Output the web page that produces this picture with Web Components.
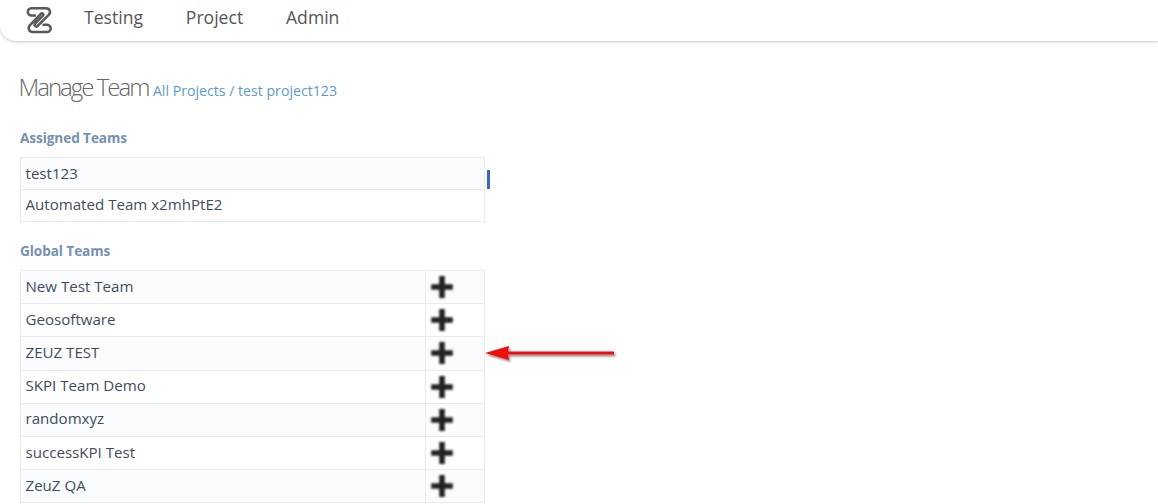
<!DOCTYPE html>
<html><head><meta charset="utf-8">
<style>
html,body{margin:0;padding:0;background:#fff;overflow:hidden;height:504px}
body{font-family:"Open Sans",sans-serif;color:#3d4a5c}
</style></head>
<body>
<template id="t-nav"><style>
:host{display:flex;align-items:center;height:41px;box-sizing:border-box;background:#fff;border-bottom-left-radius:16px;box-shadow:0 1px 3px rgba(0,0,0,.22);padding-left:25px;position:relative}
svg{width:28px;height:28px;display:block;margin-right:31px;margin-top:-1px}
.items{display:flex;gap:42.800px;font-size:17.6px;color:#555;margin-top:-8px}
</style>
<svg viewBox="0 0 28 28" fill="none" stroke="#5a5a5a" stroke-width="2.500" stroke-linejoin="round" stroke-linecap="round">
<path d="M10 9.500 H6.500 a3.600 3.600 0 0 1 -.2 -7.200 H21 c4 0 5.200 4 2.700 6.600 L12.500 20 c-1.500 1.500 -4 -.8 -2.400 -2.500 L18 9.600 c1.200 -1.200 -.6 -3.200 -2.200 -1.700 L5.200 18.800 C2.500 21.600 3.600 26 7.500 26 H22 a3.600 3.600 0 0 0 .2 -7.200 H18.500"/>
</svg>
<div class="items"><slot></slot></div></template>

<template id="t-heading"><style>
:host{display:flex;align-items:baseline;margin:29px 0 0 18.500px;height:32px;white-space:nowrap}
h1{margin:0;font-size:24px;font-weight:300;letter-spacing:-2px;color:#666}
.crumb{margin-left:4.500px;font-size:14.15px;font-weight:400;color:#6199c9}
</style><h1><slot name="title"></slot></h1><span class="crumb"><slot></slot></span></template>

<template id="t-section"><style>
:host{display:block;margin-left:20px;width:465px}
h2{margin:0;font-size:13.6px;line-height:19px;font-weight:700;color:#7690b0;letter-spacing:-.08px}
.box{margin-top:10px}
</style><h2><slot name="title"></slot></h2><div class="box"><slot></slot></div></template>

<template id="t-row"><style>
:host{--top:-1.200px;display:grid;grid-template-columns:1fr;box-sizing:border-box;height:var(--h,32px);border:1px solid #e6ecf3;border-top:0;font-size:15.1px;color:#3f4c5e;align-items:center}
:host(:nth-child(2)){border-top:1px solid #e6ecf3;height:calc(var(--h,32px) + 1px)}
:host(:nth-child(even)){background:#fbfcfe}
:host([plus]){grid-template-columns:1fr 59px}
:host(:not([plus]):nth-child(2)){--top:-.4px}
:host([plus]:nth-child(6)){--top:-1.800px}
.name{padding-left:4.500px;white-space:nowrap;position:relative;top:var(--top)}
.act{height:100%;border-left:1px solid #e6ecf3;display:flex;align-items:center;padding-left:3.500px;box-sizing:border-box}
svg{width:24px;height:24px;display:block;filter:blur(.8px)}
</style><div class="name"><slot></slot></div></template>

<template id="t-arrow"><style>
:host{position:absolute;left:485px;top:343px;width:132px;height:22px}
svg{display:block;overflow:visible}
</style><svg width="132" height="22" viewBox="0 0 132 22">
<defs><filter id="s" x="-10%" y="-50%" width="120%" height="200%"><feDropShadow dx="1.500" dy="2" stdDeviation="1.200" flood-color="#000" flood-opacity=".45"/></filter></defs>
<path filter="url(#s)" fill="#f00a0a" d="M0 10 L24 3 L23 8.600 H129 V11.600 H23 L24 17 Z"/></svg></template>

<template id="t-tick"><style>
:host{position:absolute;left:487px;top:170px;width:3px;height:19px;background:#3a66c8}
</style></template>

<zeuz-nav><span>Testing</span><span>Project</span><span>Admin</span></zeuz-nav>
<zeuz-heading><span slot="title">Manage Team</span>All Projects / test project123</zeuz-heading>
<zeuz-section style="margin-top:26px;--h:32px"><span slot="title">Assigned Teams</span>
<zeuz-row>test123</zeuz-row><zeuz-row>Automated Team x2mhPtE2</zeuz-row></zeuz-section>
<zeuz-section style="margin-top:19px;--h:33.2px"><span slot="title">Global Teams</span>
<zeuz-row plus>New Test Team</zeuz-row><zeuz-row plus>Geosoftware</zeuz-row><zeuz-row plus>ZEUZ TEST</zeuz-row><zeuz-row plus>SKPI Team Demo</zeuz-row><zeuz-row plus>randomxyz</zeuz-row><zeuz-row plus>successKPI Test</zeuz-row><zeuz-row plus>ZeuZ QA</zeuz-row></zeuz-section>
<zeuz-tick></zeuz-tick><zeuz-arrow></zeuz-arrow>
<script>
const mk=(n,id,after)=>customElements.define(n,class extends HTMLElement{constructor(){super();const s=this.attachShadow({mode:'open'});s.appendChild(document.getElementById(id).content.cloneNode(true));after&&after(this,s)}});
mk('zeuz-nav','t-nav');mk('zeuz-heading','t-heading');mk('zeuz-section','t-section');mk('zeuz-tick','t-tick');mk('zeuz-arrow','t-arrow');
mk('zeuz-row','t-row',(h,s)=>{if(h.hasAttribute('plus')){const d=document.createElement('div');d.className='act';d.innerHTML='<svg viewBox="0 0 24 24"><path fill="#222" d="M9.200 1h5.600v8.200h8v5.600h-8v8.200H9.200v-8.200h-8V9.200h8z"/></svg>';s.appendChild(d)}});
</script>
</body></html>
